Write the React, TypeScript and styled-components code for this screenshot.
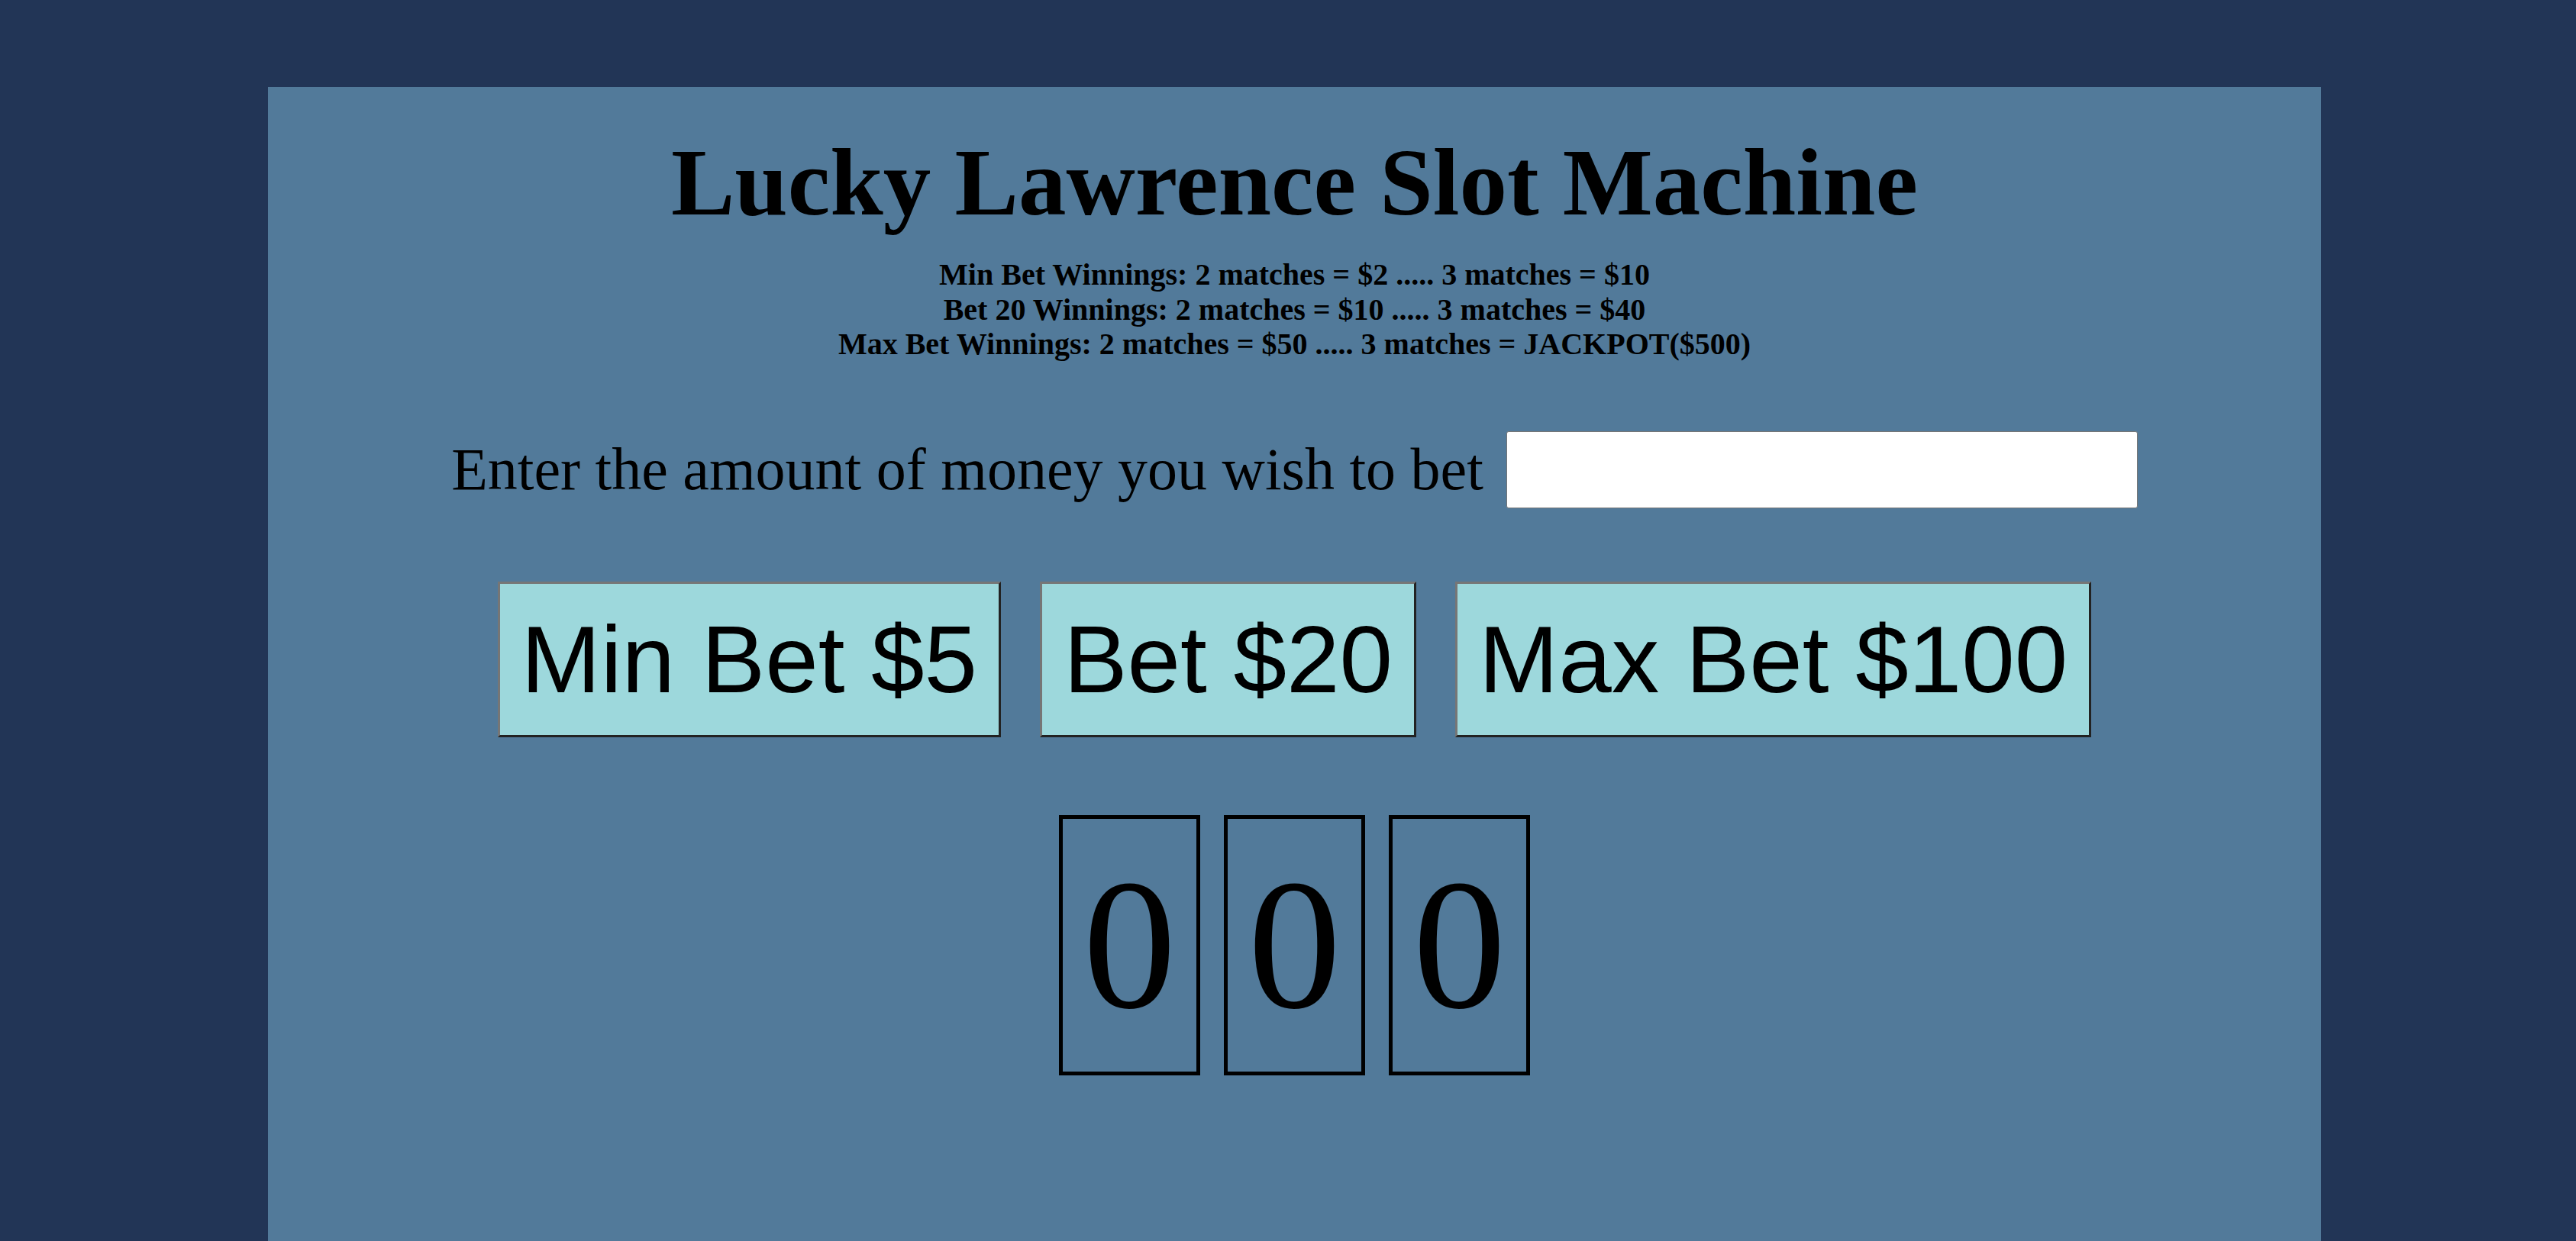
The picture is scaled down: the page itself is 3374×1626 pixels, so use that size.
import React from "react";
import styled, { createGlobalStyle } from "styled-components";

const GlobalStyle = createGlobalStyle`
  html, body {
    margin: 0;
    padding: 0;
    background: #223556;
  }
  body {
    font-family: "Liberation Serif", "Times New Roman", serif;
    color: #000;
  }
`;

const Page = styled.div`
  min-height: 100vh;
  padding-top: 114px;
  box-sizing: border-box;
  display: flex;
  flex-direction: column;
`;

const Panel = styled.main`
  margin-left: 351px;
  width: 2689px;
  flex: 1;
  min-height: 1512px;
  background: #527a9a;
  display: flex;
  flex-direction: column;
  align-items: center;
  padding-top: 53px;
  box-sizing: border-box;
`;

const Title = styled.h1`
  margin: 0;
  font-family: "Liberation Serif", "Times New Roman", serif;
  font-weight: bold;
  font-size: 125px;
  line-height: 145px;
  text-align: center;
`;

const Rules = styled.div`
  margin-top: 25px;
  display: flex;
  flex-direction: column;
  align-items: center;
`;

const RuleLine = styled.p`
  margin: 0;
  font-family: "Liberation Serif", "Times New Roman", serif;
  font-weight: bold;
  font-size: 40px;
  line-height: 45.5px;
  text-align: center;
`;

const BetRow = styled.div`
  margin-top: 91px;
  display: flex;
  align-items: center;
  gap: 30px;
`;

const BetLabel = styled.label`
  font-family: "Liberation Serif", "Times New Roman", serif;
  font-size: 78px;
  line-height: 90px;
`;

const BetInput = styled.input`
  width: 827px;
  height: 101px;
  box-sizing: border-box;
  border: 1px solid #767676;
  border-radius: 3px;
  background: #fff;
  font-size: 60px;
  padding: 0 10px;
  outline: none;
`;

const ButtonRow = styled.div`
  margin-top: 96px;
  display: flex;
  gap: 51px;
`;

const BetButton = styled.button`
  font-family: "Liberation Sans", Arial, sans-serif;
  font-size: 125px;
  line-height: 144px;
  height: 204px;
  box-sizing: border-box;
  padding: 0 28px;
  background: #9dd8dc;
  color: #000;
  border-style: solid;
  border-width: 3px;
  border-color: #767676 #222222 #222222 #767676;
  cursor: pointer;
`;

const Reels = styled.div`
  margin-top: 102px;
  display: flex;
  gap: 31px;
`;

const Reel = styled.div`
  width: 185px;
  height: 341px;
  box-sizing: border-box;
  border: 5px solid #000;
  display: flex;
  align-items: center;
  justify-content: center;
  font-family: "Liberation Serif", "Times New Roman", serif;
  font-size: 244px;
  line-height: 1;
`;

const rules = [
  "Min Bet Winnings: 2 matches = $2 ..... 3 matches = $10",
  "Bet 20 Winnings: 2 matches = $10 ..... 3 matches = $40",
  "Max Bet Winnings: 2 matches = $50 ..... 3 matches = JACKPOT($500)",
];

const bets = ["Min Bet $5", "Bet $20", "Max Bet $100"];
const reels = [0, 0, 0];

export default function App() {
  return (
    <>
      <GlobalStyle />
      <Page>
        <Panel>
          <Title>Lucky Lawrence Slot Machine</Title>
          <Rules>
            {rules.map((r) => (
              <RuleLine key={r}>{r}</RuleLine>
            ))}
          </Rules>
          <BetRow>
            <BetLabel htmlFor="bet">Enter the amount of money you wish to bet</BetLabel>
            <BetInput id="bet" type="text" />
          </BetRow>
          <ButtonRow>
            {bets.map((b) => (
              <BetButton key={b}>{b}</BetButton>
            ))}
          </ButtonRow>
          <Reels>
            {reels.map((v, i) => (
              <Reel key={i}>{v}</Reel>
            ))}
          </Reels>
        </Panel>
      </Page>
    </>
  );
}
